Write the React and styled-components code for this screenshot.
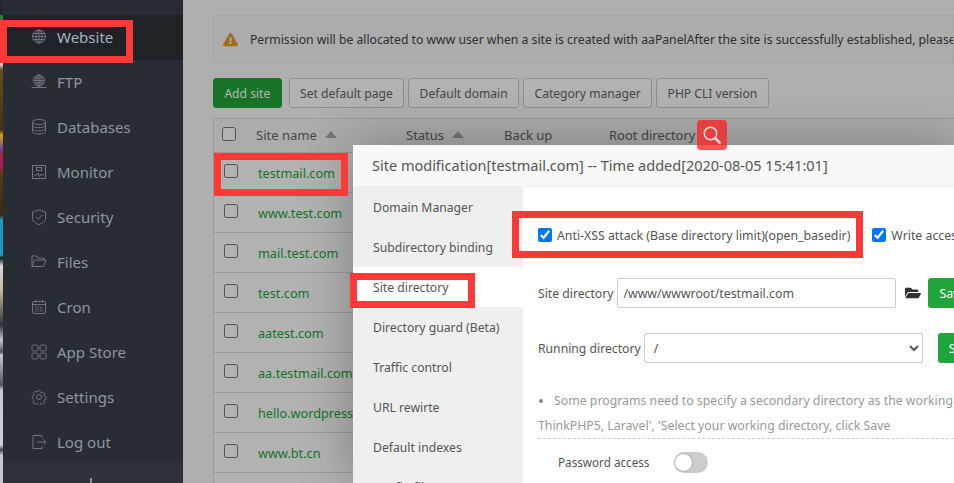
import React from "react";
import styled, { createGlobalStyle } from "styled-components";
import { FaExclamationTriangle, FaFolderOpen } from "react-icons/fa";

const FONT = `"Noto Sans", "Open Sans", "Liberation Sans", sans-serif`;

const GlobalStyle = createGlobalStyle`
  html, body { margin: 0; padding: 0; background: #b0b0b0; }
  body { font-family: ${FONT}; width: 954px; height: 483px; overflow: hidden; }
  * { box-sizing: border-box; }
`;

const Globe = () => (
  <>
    <circle cx="8" cy="7.5" r="6.5" />
    <ellipse cx="8" cy="7.5" rx="3" ry="6.5" />
    <path d="M8 1v13M2 4.5h12M1.5 7.5h13M2 10.5h12" />
  </>
);

const navItems = [
  { label: "Website", active: true, icon: <Globe /> },
  {
    label: "FTP",
    icon: (
      <>
        <circle cx="8" cy="6.5" r="5.5" />
        <ellipse cx="8" cy="6.5" rx="2.5" ry="5.5" />
        <path d="M8 1v11M3 4h10M2.5 6.5h11M3 9h10M8 12v1.5M0.5 13.5h15" />
      </>
    ),
  },
  {
    label: "Databases",
    icon: (
      <>
        <ellipse cx="8" cy="3" rx="6.5" ry="2.5" />
        <path d="M1.5 3v9.5c0 1.4 2.9 2.5 6.5 2.5s6.5-1.1 6.5-2.5V3M1.5 6.2c0 1.4 2.9 2.5 6.5 2.5s6.5-1.1 6.5-2.5M1.5 9.4c0 1.4 2.9 2.5 6.5 2.5s6.5-1.1 6.5-2.5" />
      </>
    ),
  },
  {
    label: "Monitor",
    icon: (
      <>
        <rect x="1.5" y="1.5" width="13" height="13" />
        <rect x="5.5" y="3.5" width="5" height="3" />
        <path d="M3 11h3l1-2 1.5 3.5L10 10l.8 1H13" />
      </>
    ),
  },
  {
    label: "Security",
    icon: (
      <>
        <path d="M8 .8l6.500 2.400v6c0 3-3 5.200-6.500 6.300-3.500-1.100-6.500-3.300-6.500-6.300v-6z" />
        <path d="M5 8l2.200 2.200L11.200 6" />
      </>
    ),
  },
  {
    label: "Files",
    icon: <path d="M1 12.500V2h4.500l1.500 2h6v2M1 12.500L3.500 6H15l-2.500 6.500z" />,
  },
  {
    label: "Cron",
    icon: (
      <>
        <rect x="1.500" y="2.500" width="13" height="12" rx="1.500" />
        <path d="M1.500 5.500h13M4.500 1v2.500M11.500 1v2.500" />
        <path d="M4 8h8M4 10h8M4 12h8" strokeDasharray="1.500 1" />
      </>
    ),
  },
  {
    label: "App Store",
    icon: (
      <>
        <rect x="1" y="1" width="6" height="6" rx="1.500" />
        <rect x="9" y="1" width="6" height="6" rx="1.500" />
        <rect x="1" y="9" width="6" height="6" rx="1.500" />
        <rect x="9" y="9" width="6" height="6" rx="1.500" />
      </>
    ),
  },
  {
    label: "Settings",
    icon: (
      <>
        <circle cx="8" cy="8" r="2.500" />
        <path
          d="M6.800 1h2.400l.4 2 1.500.7 1.800-1 1.700 1.700-1 1.800.6 1.500 1.800.4v2.400l-1.800.4-.6 1.500 1 1.800-1.700 1.700-1.800-1-1.500.6-.4 1.900H6.800l-.4-1.900-1.500-.6-1.800 1-1.700-1.700 1-1.800-.6-1.500L.5 9.200V6.800l1.800-.4.600-1.500-1-1.800 1.700-1.700 1.800 1 1.500-.7z"
          transform="translate(.8 .8) scale(.9)"
        />
      </>
    ),
  },
  {
    label: "Log out",
    icon: <path d="M11 4V1.500H2v13h9V12M6.500 8H15M12.500 5.500L15 8l-2.500 2.500" />,
  },
];

const buttons = ["Set default page", "Default domain", "Category manager", "PHP CLI version"];

const sites = [
  "testmail.com",
  "www.test.com",
  "mail.test.com",
  "test.com",
  "aatest.com",
  "aa.testmail.com",
  "hello.wordpress.com",
  "www.bt.cn",
  "",
];

const tabs = [
  "Domain Manager",
  "Subdirectory binding",
  "Site directory",
  "Directory guard (Beta)",
  "Traffic control",
  "URL rewirte",
  "Default indexes",
  "Config file",
];

const App = () => (
  <Page>
    <GlobalStyle />
    <DesktopStrip />
    <Sidebar>
      {navItems.map((item) => (
        <NavItem key={item.label} $active={item.active}>
          <NavIcon viewBox="0 0 16 16">{item.icon}</NavIcon>
          {item.label}
        </NavItem>
      ))}
      <SidebarFoot />
    </Sidebar>
    <Main>
      <Notice>
        <WarnIcon />
        Permission will be allocated to www user when a site is created with aaPanelAfter the site is
        successfully established, please
      </Notice>
      <ButtonRow>
        <AddButton>Add site</AddButton>
        {buttons.map((b) => (
          <GhostButton key={b}>{b}</GhostButton>
        ))}
      </ButtonRow>
      <SiteTable>
        <HeadRow>
          <CheckCell $head>
            <Check type="checkbox" />
          </CheckCell>
          <HeadCell $w={150}>
            Site name <SortArrow />
          </HeadCell>
          <HeadCell $w={98}>
            Status <SortArrow />
          </HeadCell>
          <HeadCell $w={105}>Back up</HeadCell>
          <HeadCell>Root directory</HeadCell>
        </HeadRow>
        {sites.map((s, i) => (
          <SiteRow key={i}>
            <CheckCell>
              <Check type="checkbox" />
            </CheckCell>
            <SiteLink>{s}</SiteLink>
          </SiteRow>
        ))}
      </SiteTable>
      <Scrim />
    </Main>

    <Modal>
      <ModalTitle>Site modification[testmail.com] -- Time added[2020-08-05 15:41:01]</ModalTitle>
      <ModalBody>
        <Tabs>
          {tabs.map((t) => (
            <Tab key={t} $active={t === "Site directory"}>
              {t}
            </Tab>
          ))}
        </Tabs>
        <Content>
          <CheckRow>
            <CheckLabel>
              <BlueCheck type="checkbox" defaultChecked />
              Anti-XSS attack (Base directory limit)(open_basedir)
            </CheckLabel>
            <CheckLabel>
              <BlueCheck type="checkbox" defaultChecked />
              Write access log
            </CheckLabel>
          </CheckRow>
          <FieldRow>
            <FieldLabel>Site directory</FieldLabel>
            <PathInput defaultValue="/www/wwwroot/testmail.com" />
            <FolderButton>
              <FaFolderOpen size={16} />
            </FolderButton>
            <SaveButton>Save</SaveButton>
          </FieldRow>
          <FieldRow>
            <RunningLabel>Running directory</RunningLabel>
            <DirSelect defaultValue="/">
              <option value="/">/</option>
            </DirSelect>
            <SaveButton $gap={15}>Save</SaveButton>
          </FieldRow>
          <HelpLine>
            <Bullet />
            Some programs need to specify a secondary directory as the working directory, such as
          </HelpLine>
          <HelpLast>ThinkPHP5, Laravel', 'Select your working directory, click Save</HelpLast>
          <PasswordRow>
            <PasswordLabel>Password access</PasswordLabel>
            <Toggle />
          </PasswordRow>
        </Content>
      </ModalBody>
    </Modal>

    <SearchBadge>
      <svg width="18" height="18" viewBox="0 0 18 18" fill="none" stroke="#f4dcdc" strokeWidth="1.500">
        <circle cx="7.500" cy="7.500" r="6.200" />
        <path d="M12 12l4.500 4.500" strokeWidth="2.500" strokeLinecap="round" />
      </svg>
    </SearchBadge>

    <RedMark $x={0} $y={20} $w={133} $h={43} />
    <RedMark $x={214} $y={153} $w={134} $h={43} />
    <RedMark $x={350} $y={273} $w={125} $h={35} />
    <RedMark $x={512} $y={211} $w={351} $h={47} />
  </Page>
);

const Page = styled.div`
  position: relative;
  display: flex;
  width: 954px;
  height: 483px;
  overflow: hidden;
`;

const DesktopStrip = styled.div`
  flex: 0 0 3px;
  background: linear-gradient(
    #23282d 0,
    #23282d 15px,
    #1a8a34 15px,
    #1a8a34 20px,
    #6b4a1c 60px,
    #f0f0f0 63px,
    #6b4a1c 70px,
    #4a3010 130px,
    #d9a015 135px,
    #6a3fa0 150px,
    #c01b3a 155px,
    #b0155a 165px,
    #5a3a14 175px,
    #3a2a10 215px,
    #1a9ac0 220px,
    #1a9ac0 255px,
    #101820 258px,
    #d8d8d8 266px,
    #c8b8a0 290px,
    #333 325px,
    #c8c8c8 340px,
    #555 352px,
    #c8c8c8 355px,
    #555 385px,
    #c8c8c8 390px,
    #d0d0d0 445px,
    #444 450px,
    #c8c8c8 455px
  );
`;

const Sidebar = styled.nav`
  position: relative;
  flex: 0 0 180px;
  padding-top: 15px;
  background: #282d33;
`;

const SidebarFoot = styled.div`
  position: absolute;
  left: 0;
  right: 0;
  bottom: 0;
  height: 22px;
  background: #2d3239;

  &::after {
    content: "";
    position: absolute;
    left: 87px;
    bottom: 0;
    width: 2px;
    height: 5px;
    background: #8d9299;
  }
`;

const NavItem = styled.div`
  display: flex;
  align-items: center;
  gap: 10px;
  height: 45px;
  padding: 0 0 2px 28px;
  font-size: 15px;
  color: ${(p) => (p.$active ? "#a9b2bd" : "#8d96a1")};
  background: ${(p) => (p.$active ? "#1f2328" : "transparent")};
`;

const NavIcon = styled.svg`
  flex: 0 0 16px;
  width: 16px;
  height: 16px;
  fill: none;
  stroke: #70757b;
  stroke-width: 1;
`;

const Main = styled.main`
  position: relative;
  flex: 1;
  min-width: 0;
  padding: 15px 0 0 30px;
  background: #fbfbfb;
`;

const Scrim = styled.div`
  position: absolute;
  inset: 0;
  background: rgba(0, 0, 0, 0.3);
`;

const Notice = styled.div`
  display: flex;
  align-items: center;
  gap: 12px;
  height: 48px;
  padding-left: 9px;
  border: 1px solid #ebebeb;
  background: #f7f7f7;
  font-size: 12.200px;
  color: #444;
  white-space: nowrap;
  overflow: hidden;
`;

const WarnIcon = styled(FaExclamationTriangle)`
  flex: 0 0 15px;
  width: 15px;
  height: 15px;
  color: #e59c2a;
`;

const ButtonRow = styled.div`
  display: flex;
  gap: 4px;
  margin-top: 15px;
`;

const GhostButton = styled.div`
  display: flex;
  align-items: center;
  height: 30px;
  padding: 0 10.400px;
  border: 1px solid #ccc;
  border-radius: 3px;
  background: #fff;
  font-size: 12.100px;
  color: #666;
`;

const AddButton = styled(GhostButton)`
  margin-right: 3px;
  border-color: #20a53a;
  background: #20a53a;
  color: #fff;
`;

const SiteTable = styled.div`
  margin-top: 10px;
  border-left: 1px solid #ddd;
`;

const HeadRow = styled.div`
  display: flex;
  align-items: center;
  height: 35px;
  padding-bottom: 2px;
  border-top: 1px solid #ddd;
  border-bottom: 1px solid #ddd;
  background: #f6f6f6;
`;

const SiteRow = styled(HeadRow)`
  height: 40px;
  padding-bottom: 0;
  border-top: 0;
  background: #fff;
`;

const CheckCell = styled.div`
  display: flex;
  flex: 0 0 42px;
  padding-left: ${(p) => (p.$head ? 8 : 10)}px;
  ${(p) => (p.$head ? "margin-top: -2px;" : "margin-top: -3px;")}
`;

const Check = styled.input`
  width: 14px;
  height: 14px;
  margin: 0;
  accent-color: #0075ff;
`;

const HeadCell = styled.div`
  display: flex;
  align-items: center;
  flex: 0 0 ${(p) => (p.$w ? `${p.$w}px` : "auto")};
  font-size: 13px;
  color: #666;
`;

const SortArrow = styled.span`
  margin-left: 8px;
  border-left: 6.500px solid transparent;
  border-right: 6.500px solid transparent;
  border-bottom: 7px solid #aaa;
`;

const SiteLink = styled.div`
  margin-left: 2px;
  font-size: 12.700px;
  color: #20a53a;
  white-space: nowrap;
`;

const Modal = styled.section`
  position: absolute;
  left: 353px;
  top: 145px;
  right: 0;
  bottom: 0;
  background: #fff;
  box-shadow: 1px 1px 50px rgba(0, 0, 0, 0.3);
`;

const ModalTitle = styled.div`
  display: flex;
  align-items: center;
  height: 42px;
  padding: 0 0 2px 19px;
  border-bottom: 1px solid #eee;
  background: #f8f8f8;
  font-size: 14.500px;
  color: #555;
  white-space: nowrap;
`;

const ModalBody = styled.div`
  display: flex;
  height: 296px;
  overflow: hidden;
`;

const Tabs = styled.div`
  flex: 0 0 170px;
  background: #efefef;
`;

const Tab = styled.div`
  display: flex;
  align-items: center;
  height: 40px;
  padding-left: 20px;
  font-size: 12.200px;
  color: #555;
  background: ${(p) => (p.$active ? "#fff" : "transparent")};
`;

const Content = styled.div`
  flex: 1;
  min-width: 0;
  padding: 40px 0 0 15px;
  font-size: 12.200px;
  color: #555;
  overflow: hidden;
`;

const CheckRow = styled.div`
  display: flex;
  gap: 22px;
  height: 16px;
  white-space: nowrap;
`;

const CheckLabel = styled.label`
  display: flex;
  align-items: center;
  gap: 5px;
  font-size: 12.300px;
`;

const BlueCheck = styled(Check)`
  flex: 0 0 14px;
`;

const FieldRow = styled.div`
  display: flex;
  align-items: center;
  height: 30px;
  margin-top: 25px;

  &:nth-child(2) {
    margin-top: 35px;
  }
`;

const FieldLabel = styled.span`
  margin-right: 4px;
  white-space: nowrap;
`;

const RunningLabel = styled(FieldLabel)`
  margin-right: 3px;
`;

const PathInput = styled.input`
  flex: 0 0 279px;
  height: 30px;
  padding: 0 5px;
  border: 1px solid #ccc;
  border-radius: 2px;
  outline: none;
  font: 12.300px ${FONT};
  color: #555;
`;

const DirSelect = styled.select`
  flex: 0 0 279px;
  height: 30px;
  padding-left: 5px;
  border: 1px solid #ccc;
  border-radius: 2px;
  background: #fff;
  font: 12.300px ${FONT};
  color: #555;
`;

const FolderButton = styled.span`
  display: flex;
  margin: 0 7px 0 9px;
  color: #333;
`;

const SaveButton = styled.div`
  display: flex;
  align-items: center;
  flex: 0 0 50px;
  height: 30px;
  margin-left: ${(p) => p.$gap || 0}px;
  padding-left: 11px;
  border-radius: 3px;
  background: #20a53a;
  color: #fff;
  font-size: 12.300px;
`;

const HelpLine = styled.div`
  display: flex;
  align-items: center;
  margin-top: 28px;
  font-size: 12.300px;
  line-height: 20px;
  color: #999;
  white-space: nowrap;
`;

const Bullet = styled.span`
  flex: 0 0 4px;
  width: 4px;
  height: 4px;
  margin: 0 11px 0 1px;
  border-radius: 50%;
  background: #888;
`;

const HelpLast = styled.div`
  margin-top: 5px;
  padding-bottom: 2px;
  border-bottom: 1px dashed #ccc;
  font-size: 12.300px;
  line-height: 20px;
  color: #999;
  white-space: nowrap;
`;

const PasswordRow = styled.div`
  display: flex;
  align-items: center;
  gap: 25px;
  height: 22px;
  margin-top: 12px;
  padding-left: 20px;
`;

const PasswordLabel = styled.span`
  font-size: 11.700px;
`;

const Toggle = styled.span`
  position: relative;
  width: 34px;
  height: 21px;
  border-radius: 11px;
  background: #ccc;

  &::after {
    content: "";
    position: absolute;
    left: 1px;
    top: 2px;
    width: 17px;
    height: 17px;
    border-radius: 50%;
    background: #fff;
    box-shadow: 0 0 2px rgba(0, 0, 0, 0.4);
  }
`;

const SearchBadge = styled.div`
  position: absolute;
  left: 697px;
  top: 120px;
  display: flex;
  align-items: center;
  justify-content: center;
  width: 30px;
  height: 30px;
  border-radius: 4px;
  background: rgba(250, 36, 36, 0.775);
`;

const RedMark = styled.div`
  position: absolute;
  left: ${(p) => p.$x}px;
  top: ${(p) => p.$y}px;
  width: ${(p) => p.$w}px;
  height: ${(p) => p.$h}px;
  border: 7px solid #ff3838;
`;

export default App;
